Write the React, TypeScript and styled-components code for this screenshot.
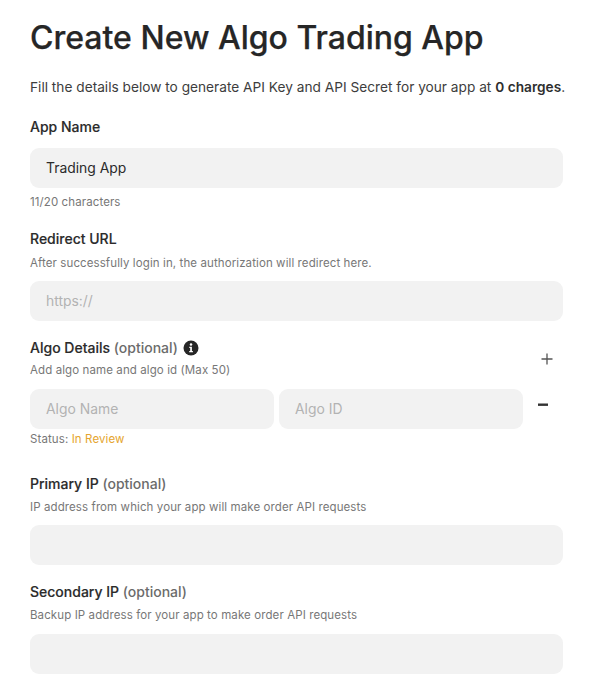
import React from "react";
import styled, { createGlobalStyle } from "styled-components";

const Global = createGlobalStyle`
  html, body { margin: 0; padding: 0; background: #fff; }
  body { font-family: Inter, "Liberation Sans", sans-serif; overflow: hidden; }
  * { box-sizing: border-box; }
`;

const Page = styled.main`
  width: 603px;
  height: 695px;
  overflow: hidden;
  padding: 19px 40px 0 30px;
`;

const Title = styled.h1`
  margin: 0;
  font-size: 32px;
  line-height: 38px;
  font-weight: 500;
  -webkit-text-stroke: 0.25px #262626;
  color: #262626;
  white-space: nowrap;
`;

const Intro = styled.p`
  margin: 21px 0 0;
  font-size: 13.7px;
  line-height: 18px;
  color: #3d3d3d;
  white-space: nowrap;
  b { font-weight: 600; color: #2e2e2e; }
`;

const Section = styled.section<{ $top: number }>`
  margin-top: ${(p) => p.$top}px;
`;

const Label = styled.label`
  display: flex;
  align-items: center;
  gap: 5px;
  font-size: 14px;
  line-height: 18px;
  font-weight: 500;
  -webkit-text-stroke: 0.15px #2b2b2b;
  color: #2b2b2b;
  white-space: nowrap;
`;

const Optional = styled.span`
  font-weight: 500;
  -webkit-text-stroke: 0;
  color: #6b6b6b;
`;

const Hint = styled.div<{ $top?: number }>`
  margin-top: ${(p) => p.$top ?? 7}px;
  font-size: 11.5px;
  line-height: 14px;
  letter-spacing: 0.1px;
  color: #777;
  white-space: nowrap;
`;

const Field = styled.input<{ $top: number }>`
  display: block;
  width: 100%;
  min-width: 0;
  height: 40px;
  margin-top: ${(p) => p.$top}px;
  padding: 0 16px;
  border: 0;
  outline: 0;
  border-radius: 9px;
  background: #f2f2f2;
  font-family: inherit;
  font-size: 13.9px;
  color: #2b2b2b;
  &::placeholder { color: #b3b3b3; opacity: 1; }
`;

const AlgoHead = styled.div`
  display: flex;
  justify-content: space-between;
  align-items: center;
`;

const AlgoRow = styled.div`
  display: flex;
  align-items: flex-start;
  margin-top: 12px;
`;

const AlgoFields = styled.div`
  display: grid;
  grid-template-columns: 244px 244px;
  gap: 5px;
  width: 493px;
  flex: none;
`;

const AddButton = styled.button`
  display: flex;
  padding: 0;
  margin: 2px 9px 0 0;
  border: 0;
  background: none;
  color: #555;
`;

const RemoveButton = styled.button`
  display: flex;
  padding: 0;
  margin: 14px 0 0 14px;
  border: 0;
  background: none;
  color: #333;
`;

const Status = styled.span`
  color: #e5a52e;
`;

const InfoIcon = () => (
  <svg width="16" height="16" viewBox="0 0 16 16" aria-hidden="true">
    <circle cx="8" cy="8" r="7.5" fill="#262626" />
    <circle cx="8" cy="4.4" r="1.25" fill="#fff" />
    <path d="M6.3 6.7h2.6v4.2h1v1.3H6.2v-1.3h1V8H6.3z" fill="#fff" />
  </svg>
);

const PlusIcon = () => (
  <svg width="14" height="14" viewBox="0 0 14 14" aria-hidden="true">
    <path d="M7 1.5v11M1.5 7h11" stroke="currentColor" strokeWidth="1.3" fill="none" />
  </svg>
);

const MinusIcon = () => (
  <svg width="12" height="4" viewBox="0 0 12 4" aria-hidden="true">
    <rect x="1" y="0.5" width="10" height="2.4" fill="currentColor" />
  </svg>
);

export default function App() {
  return (
    <Page>
      <Global />
      <Title>Create New Algo Trading App</Title>
      <Intro>
        Fill the details below to generate API Key and API Secret for your app at <b>0 charges</b>.
      </Intro>

      <Section $top={22}>
        <Label>App Name</Label>
        <Field $top={12} defaultValue="Trading App" />
        <Hint $top={7}>11/20 characters</Hint>
      </Section>

      <Section $top={21}>
        <Label>Redirect URL</Label>
        <Hint $top={8}>After successfully login in, the authorization will redirect here.</Hint>
        <Field $top={11} placeholder="https://" />
      </Section>

      <Section $top={18}>
        <AlgoHead>
          <div>
            <Label>
              <span>
                Algo Details <Optional>(optional)</Optional>
              </span>
              <InfoIcon />
            </Label>
            <Hint $top={6}>Add algo name and algo id (Max 50)</Hint>
          </div>
          <AddButton aria-label="Add algo">
            <PlusIcon />
          </AddButton>
        </AlgoHead>
        <AlgoRow>
          <AlgoFields>
            <Field $top={0} placeholder="Algo Name" />
            <Field $top={0} placeholder="Algo ID" />
          </AlgoFields>
          <RemoveButton aria-label="Remove algo">
            <MinusIcon />
          </RemoveButton>
        </AlgoRow>
        <Hint $top={3}>
          Status: <Status>In Review</Status>
        </Hint>
      </Section>

      <Section $top={29}>
        <Label>
          <span>
            Primary IP <Optional>(optional)</Optional>
          </span>
        </Label>
        <Hint>IP address from which your app will make order API requests</Hint>
        <Field $top={11} />
      </Section>

      <Section $top={18}>
        <Label>
          <span>
            Secondary IP <Optional>(optional)</Optional>
          </span>
        </Label>
        <Hint>Backup IP address for your app to make order API requests</Hint>
        <Field $top={12} />
      </Section>
    </Page>
  );
}
